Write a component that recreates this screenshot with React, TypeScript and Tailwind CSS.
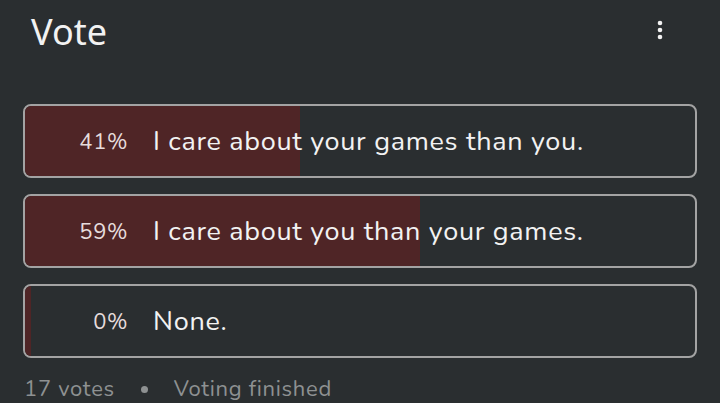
const options = [
  { pct: 41, label: "I care about your games than you." },
  { pct: 59, label: "I care about you than your games." },
  { pct: 0, label: "None." },
];

const App = () => {
  return (
    <div
      className="w-[720px] h-[403px] bg-[#2a2e30] overflow-hidden text-[#f2f2f2]"
      style={{ fontFamily: '"Nunito", "Lato", "Noto Sans", sans-serif' }}
    >
      <div className="flex items-start justify-between pl-[31px] pr-[52px] pt-[10px] h-[104px]">
        <h1 className="text-[36px] leading-[44px] font-normal" style={{ fontFamily: '"Noto Sans", sans-serif' }}>
          Vote
        </h1>
        <svg width="16" height="24" viewBox="0 0 16 24" className="mt-[8px]">
          <circle cx="8" cy="5" r="2.3" fill="#f2f2f2" />
          <circle cx="8" cy="12" r="2.3" fill="#f2f2f2" />
          <circle cx="8" cy="19" r="2.3" fill="#f2f2f2" />
        </svg>
      </div>
      <div className="flex flex-col gap-[16px] pl-[23px] pr-[23px]">
        {options.map((o) => (
          <div
            key={o.label}
            className="relative h-[74px] rounded-[8px] border-2 border-[#a3a3a3] overflow-hidden"
          >
            <div
              className="absolute left-0 top-0 bottom-0 bg-[#4f2526]"
              style={{ width: `max(6px, ${o.pct}%)` }}
            />
            <div className="relative flex items-center h-full pt-[3px]">
              <span className="w-[103px] text-right text-[22px] tracking-[0.6px] text-[#e6dcdc]">{o.pct}%</span>
              <span className="ml-[25px] text-[27px] tracking-[0.7px]">{o.label}</span>
            </div>
          </div>
        ))}
      </div>
      <div className="flex items-center pl-[24px] pt-[17px] text-[22px] tracking-[0.7px] leading-[28px] text-[#8e9192]">
        <span>17 votes</span>
        <span className="w-[7px] h-[7px] rounded-full bg-[#8e9192] ml-[26px] mr-[26px]" />
        <span>Voting finished</span>
      </div>
    </div>
  );
};

export default App;
